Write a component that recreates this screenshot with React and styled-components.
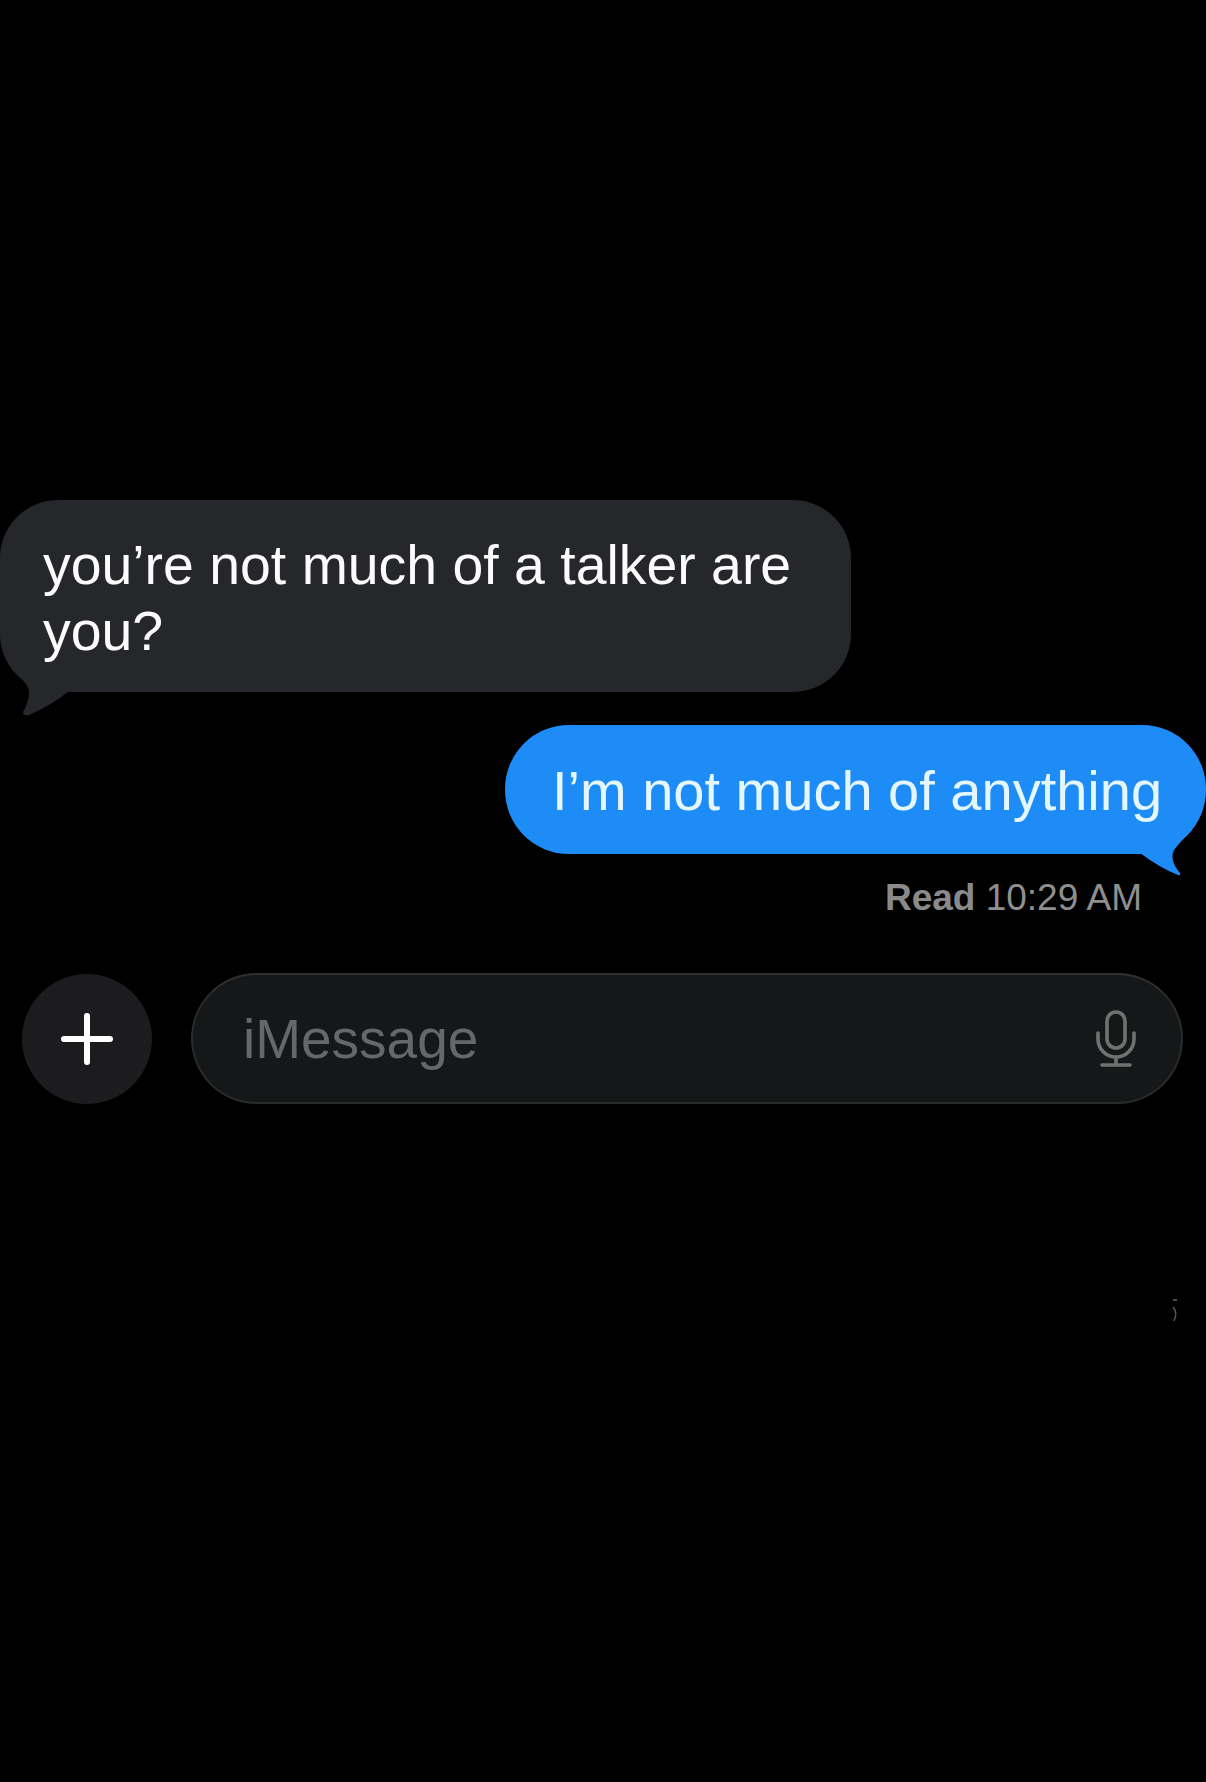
import React from 'react';
import styled, { createGlobalStyle } from 'styled-components';

const GlobalStyle = createGlobalStyle`
  html, body {
    margin: 0;
    background: #000;
  }
`;

const App = () => {
  return (
    <>
      <GlobalStyle />
      <Screen>
        <Thread>
          <Incoming>
            you’re not much of a talker are you?
            <TailLeft viewBox="0 0 70 50" width="70" height="50">
              <path d="M12 0Q30 14 29 24Q28 33 23 42Q23 46 29 45Q50 36 68 22L68 0Z" fill="#26272b" />
            </TailLeft>
          </Incoming>
          <Outgoing>
            I’m not much of anything
            <TailRight viewBox="0 0 70 50" width="70" height="50">
              <path d="M4 23Q24 38 42 45Q45 46 44 43Q33 30 38 20Q44 12 56 0L20 0Z" fill="#1e8cf6" />
            </TailRight>
          </Outgoing>
          <Receipt>
            <strong>Read</strong> 10:29 AM
          </Receipt>
        </Thread>
        <Composer>
          <PlusButton>
            <svg viewBox="0 0 52 52" width="52" height="52">
              <path d="M26 3V49M3 26H49" stroke="#fff" strokeWidth="6" strokeLinecap="round" />
            </svg>
          </PlusButton>
          <Field>
            <Placeholder>iMessage</Placeholder>
            <svg viewBox="0 0 42 58" width="42" height="58">
              <g fill="none" stroke="#707272" strokeWidth="3.6" strokeLinecap="round">
                <rect x="12" y="2" width="18" height="36" rx="9" />
                <path d="M3 23V29A18 18 0 0 0 39 29V23M21 47V55M7 55H35" />
              </g>
            </svg>
          </Field>
        </Composer>
        <Speck viewBox="0 0 10 26" width="10" height="26">
          <path d="M3 2H7" stroke="#4a4a4a" strokeWidth="2" />
          <path d="M3 9Q8 15 4 23" fill="none" stroke="#555" strokeWidth="1.5" />
        </Speck>
      </Screen>
    </>
  );
};

const Screen = styled.main`
  position: relative;
  width: 1206px;
  height: 1782px;
  overflow: hidden;
  padding-top: 500px;
  box-sizing: border-box;
  background: #000;
  font-family: 'Liberation Sans', Arial, sans-serif;
`;

const Thread = styled.section`
  display: flex;
  flex-direction: column;
`;

const Bubble = styled.div`
  position: relative;
  box-sizing: border-box;
  line-height: 66px;
  font-weight: 400;
`;

const Incoming = styled(Bubble)`
  align-self: flex-start;
  width: 851px;
  padding: 32px 43px 28px;
  border-radius: 58px;
  background: #26272b;
  color: #fbfbfb;
  font-size: 55.4px;
`;

const Outgoing = styled(Bubble)`
  align-self: flex-end;
  width: 701px;
  margin-top: 33px;
  padding: 33px 0 30px 47px;
  border-radius: 64px;
  background: #1e8cf6;
  color: #e4f6ff;
  font-size: 56px;
  white-space: nowrap;
`;

const TailLeft = styled.svg`
  position: absolute;
  left: 0;
  bottom: -28px;
`;

const TailRight = styled.svg`
  position: absolute;
  right: 0;
  bottom: -26px;
`;

const Receipt = styled.div`
  align-self: flex-end;
  margin: 24px 64px 0 0;
  font-size: 37px;
  line-height: 40px;
  color: #8f8f8f;

  strong {
    font-weight: 700;
    color: #8a8a8a;
  }
`;

const Composer = styled.section`
  display: flex;
  align-items: center;
  gap: 39px;
  margin-top: 55px;
  padding: 0 23px 0 22px;
`;

const PlusButton = styled.div`
  flex: none;
  display: flex;
  align-items: center;
  justify-content: center;
  width: 130px;
  height: 130px;
  border-radius: 50%;
  background: #1c1c1e;
`;

const Field = styled.div`
  flex: 1;
  display: flex;
  align-items: center;
  justify-content: space-between;
  box-sizing: border-box;
  height: 131px;
  padding: 0 44px 0 50px;
  border: 2px solid #2a2b2b;
  border-top-color: #2e2f2f;
  border-radius: 66px;
  background: #151718;
`;

const Placeholder = styled.span`
  font-size: 55px;
  line-height: 66px;
  color: #656868;
`;

const Speck = styled.svg`
  position: absolute;
  left: 1170px;
  top: 1298px;
`;

export default App;
